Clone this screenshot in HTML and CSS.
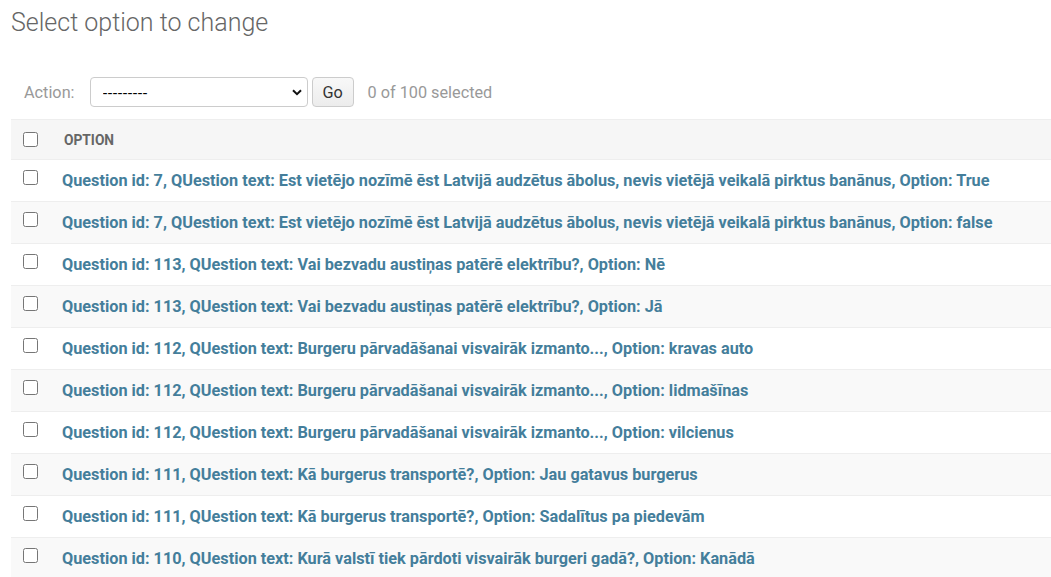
FILE: index.html
```html
<!DOCTYPE html>
<html lang="lv">
<head>
<meta charset="utf-8">
<title>Select option to change</title>
<link rel="stylesheet" href="styles.css">
</head>
<body>
<div class="content">
  <h1 class="title">Select option to change</h1>
  <div class="actions">
    <label class="action-label">Action:
      <span class="select-wrap">
        <select class="action-select">
          <option>---------</option>
          <option>Delete selected options</option>
        </select>
        <svg class="chevron" width="10" height="7" viewBox="0 0 10 7" aria-hidden="true"><path d="M1 1.2 L5 5.2 L9 1.2" fill="none" stroke="#111" stroke-width="2"/></svg>
      </span>
    </label>
    <button class="go-btn" type="button">Go</button>
    <span class="counter">0 of 100 selected</span>
  </div>
  <table class="result-list">
    <thead>
      <tr>
        <th class="check-col"><input type="checkbox" class="cb"></th>
        <th class="head-col">Option</th>
      </tr>
    </thead>
    <tbody>
      <tr><td class="check-col"><input type="checkbox" class="cb"></td><th class="row-col"><a href="#">Question id: 7, QUestion text: Est vietējo nozīmē ēst Latvijā audzētus ābolus, nevis vietējā veikalā pirktus banānus, Option: True</a></th></tr>
      <tr><td class="check-col"><input type="checkbox" class="cb"></td><th class="row-col"><a href="#">Question id: 7, QUestion text: Est vietējo nozīmē ēst Latvijā audzētus ābolus, nevis vietējā veikalā pirktus banānus, Option: false</a></th></tr>
      <tr><td class="check-col"><input type="checkbox" class="cb"></td><th class="row-col"><a href="#">Question id: 113, QUestion text: Vai bezvadu austiņas patērē elektrību?, Option: Nē</a></th></tr>
      <tr><td class="check-col"><input type="checkbox" class="cb"></td><th class="row-col"><a href="#">Question id: 113, QUestion text: Vai bezvadu austiņas patērē elektrību?, Option: Jā</a></th></tr>
      <tr><td class="check-col"><input type="checkbox" class="cb"></td><th class="row-col"><a href="#">Question id: 112, QUestion text: Burgeru pārvadāšanai visvairāk izmanto..., Option: kravas auto</a></th></tr>
      <tr><td class="check-col"><input type="checkbox" class="cb"></td><th class="row-col"><a href="#">Question id: 112, QUestion text: Burgeru pārvadāšanai visvairāk izmanto..., Option: lidmašīnas</a></th></tr>
      <tr><td class="check-col"><input type="checkbox" class="cb"></td><th class="row-col"><a href="#">Question id: 112, QUestion text: Burgeru pārvadāšanai visvairāk izmanto..., Option: vilcienus</a></th></tr>
      <tr><td class="check-col"><input type="checkbox" class="cb"></td><th class="row-col"><a href="#">Question id: 111, QUestion text: Kā burgerus transportē?, Option: Jau gatavus burgerus</a></th></tr>
      <tr><td class="check-col"><input type="checkbox" class="cb"></td><th class="row-col"><a href="#">Question id: 111, QUestion text: Kā burgerus transportē?, Option: Sadalītus pa piedevām</a></th></tr>
      <tr><td class="check-col"><input type="checkbox" class="cb"></td><th class="row-col"><a href="#">Question id: 110, QUestion text: Kurā valstī tiek pārdoti visvairāk burgeri gadā?, Option: Kanādā</a></th></tr>
    </tbody>
  </table>
</div>
</body>
</html>
```

FILE: styles.css
```css
html, body {
  margin: 0;
  padding: 0;
  background: #fff;
}

body {
  font-family: Roboto, "Liberation Sans", sans-serif;
  color: #333;
  overflow: hidden;
}

.content {
  padding-left: 11px;
}

.title {
  margin: 0;
  padding-top: 8px;
  font-size: 25px;
  line-height: 30px;
  font-weight: 300;
  color: #666;
}

.actions {
  display: flex;
  align-items: center;
  margin-top: 39px;
  padding-left: 13px;
  height: 30px;
  font-size: 16.25px;
  color: #999;
}

.action-label {
  display: flex;
  align-items: center;
  gap: 15px;
}

.select-wrap {
  position: relative;
  display: block;
  width: 218px;
  height: 30px;
}

.action-select {
  -webkit-appearance: none;
  appearance: none;
  display: block;
  width: 218px;
  height: 30px;
  border: 1px solid #ccc;
  border-radius: 4px;
  background: #fff;
  font-family: "Liberation Sans", Arial, sans-serif;
  font-size: 15px;
  color: #000;
  padding: 0 24px 0 12px;
}

.chevron {
  position: absolute;
  right: 6px;
  top: 12px;
  pointer-events: none;
}

.go-btn {
  margin-left: 4px;
  width: 42px;
  height: 30px;
  border: 1px solid #ccc;
  border-radius: 4px;
  background: linear-gradient(#f8f8f8, #ececec);
  font-family: Roboto, sans-serif;
  font-size: 16.25px;
  color: #333;
  padding: 0;
}

.counter {
  margin-left: 14px;
}

.result-list {
  margin-top: 12px;
  width: 1040px;
  border-collapse: collapse;
}

.result-list thead th {
  background: #f6f6f6;
  border-top: 1px solid #eee;
  border-bottom: 1px solid #eee;
  height: 39px;
  padding-top: 0;
  padding-bottom: 0;
  text-align: left;
}

.result-list .check-col {
  width: 39px;
  padding: 0 0 0 12px;
  vertical-align: middle;
}

.result-list tbody .check-col {
  vertical-align: top;
  padding-top: 10px;
}

.cb {
  margin: 0;
  width: 15px;
  height: 15px;
  display: block;
}

.result-list .head-col {
  font-size: 13.75px;
  font-weight: 700;
  text-transform: uppercase;
  color: #666;
  padding-left: 2px;
}

.result-list tbody tr {
  height: 42px;
}

.result-list tbody td,
.result-list tbody th {
  border-bottom: 1px solid #eee;
  padding-top: 0;
  padding-bottom: 0;
}

.result-list tbody tr:nth-child(even) {
  background: #f9f9f9;
}

.row-col {
  text-align: left;
  padding-left: 0;
  font-size: 16.25px;
  font-weight: 700;
}

.row-col a {
  color: #447e9b;
  text-decoration: none;
}
```
